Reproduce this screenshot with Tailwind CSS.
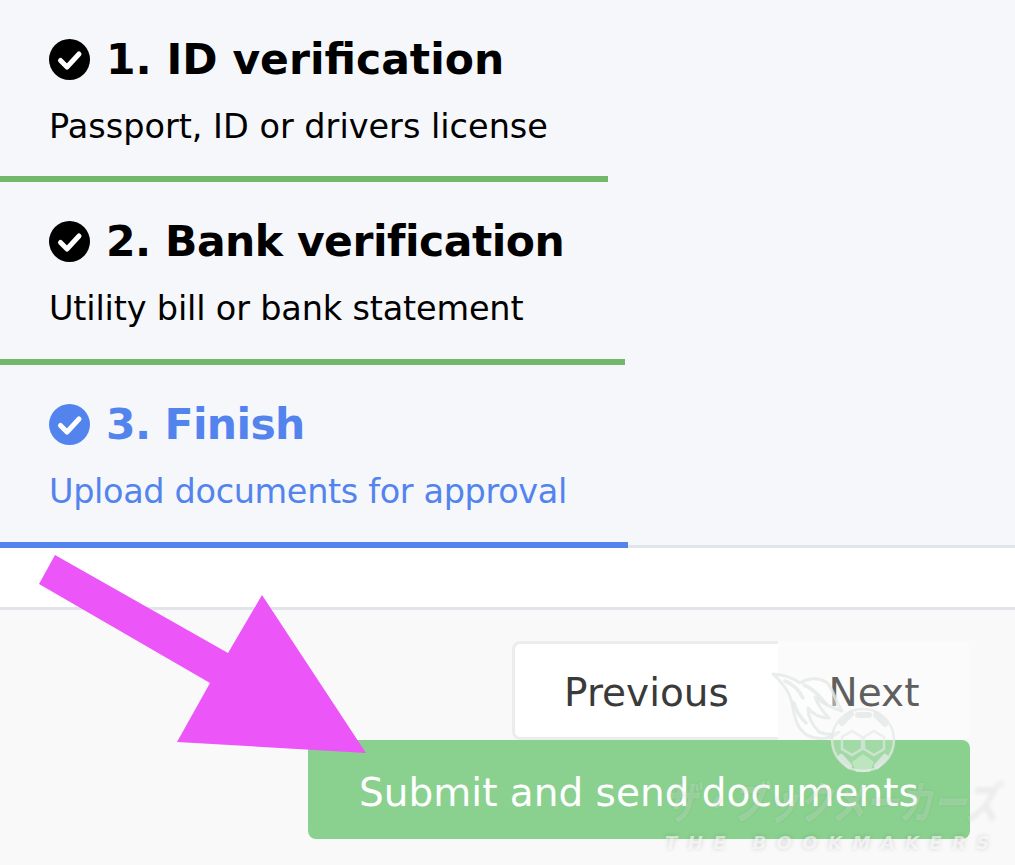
<!DOCTYPE html>
<html lang="en">

<head>
  <meta charset="UTF-8" />
  <title>Verification steps</title>
  <script src="https://cdn.jsdelivr.net/npm/@tailwindcss/browser@4"></script>
</head>

<body class="relative w-[1015px] h-[865px] overflow-hidden bg-[#f9f9f9] font-['DejaVu_Sans',sans-serif]">

  <!-- Steps -->
  <div class="bg-[#f6f7fb] h-[548px] border-b-[3px] border-[#e1e5ea]">
    <div class="h-[182px] w-[608px] border-b-[6px] border-[#72b76a] pl-[49px] pt-[36px]">
      <div class="flex items-center gap-[16px] h-[48px]">
        <svg class="w-[41px] h-[41px] shrink-0 -mt-[2px]" viewBox="0 0 41 41">
          <circle cx="20.5" cy="20.5" r="20.5" fill="#000" />
          <path d="M11.5 21.5l6.5 6.5 12-13" fill="none" stroke="#fff" stroke-width="5" stroke-linecap="round" stroke-linejoin="round" />
        </svg>
        <h2 class="text-[42.5px] leading-[48px] font-bold text-black">1. ID verification</h2>
      </div>
      <p class="mt-[19px] text-[33.5px] leading-[48px] text-black">Passport, ID or drivers license</p>
    </div>

    <div class="h-[183px] w-[625px] border-b-[6px] border-[#72b76a] pl-[49px] pt-[36px]">
      <div class="flex items-center gap-[16px] h-[48px]">
        <svg class="w-[41px] h-[41px] shrink-0 -mt-[2px]" viewBox="0 0 41 41">
          <circle cx="20.5" cy="20.5" r="20.5" fill="#000" />
          <path d="M11.5 21.5l6.5 6.5 12-13" fill="none" stroke="#fff" stroke-width="5" stroke-linecap="round" stroke-linejoin="round" />
        </svg>
        <h2 class="text-[42.5px] leading-[48px] font-bold tracking-[-0.5px] text-black">2. Bank verification</h2>
      </div>
      <p class="mt-[19px] text-[33.5px] leading-[48px] tracking-[-0.17px] text-black">Utility bill or bank statement</p>
    </div>

    <div class="h-[183px] w-[628px] border-b-[6px] border-[#5384ee] pl-[49px] pt-[36px]">
      <div class="flex items-center gap-[16px] h-[48px]">
        <svg class="w-[41px] h-[41px] shrink-0 -mt-[2px]" viewBox="0 0 41 41">
          <circle cx="20.5" cy="20.5" r="20.5" fill="#5384ee" />
          <path d="M11.5 21.5l6.5 6.5 12-13" fill="none" stroke="#fff" stroke-width="5" stroke-linecap="round" stroke-linejoin="round" />
        </svg>
        <h2 class="text-[42.5px] leading-[48px] font-bold tracking-[-0.65px] text-[#5384ee]">3. Finish</h2>
      </div>
      <p class="mt-[19px] text-[33.5px] leading-[48px] tracking-[-0.35px] text-[#5384ee]">Upload documents for approval</p>
    </div>
  </div>

  <div class="h-[62px] bg-white border-b-[3px] border-[#e1e5ea]"></div>

  <!-- Footer buttons -->
  <div class="flex flex-col items-end pt-[31px] pr-[45px]">
    <div class="flex h-[99px]">
      <button class="w-[266px] pt-[6px] bg-white border-[3px] border-r-0 border-[#ececec] rounded-l-[8px] text-[39px] text-[#3a3a3a]">Previous</button>
      <button class="w-[192px] pt-[6px] bg-[#fbfbfb] rounded-r-[8px] text-[39px] text-[#5f5f5f]">Next</button>
    </div>
    <button class="w-[662px] h-[99px] pt-[7px] bg-[#8ad18f] rounded-[8px] text-[39px] text-white">Submit and send documents</button>
  </div>

  <!-- Watermark -->
  <div class="absolute left-[660px] top-[665px] w-[355px] h-[200px] pointer-events-none">
    <svg class="absolute left-[110px] top-[0px] w-[130px] h-[115px]" viewBox="0 0 130 115">
      <!-- flame -->
      <path d="M3 9c12 1 20 4 27 9 8-5 18-6 26-1 7 5 9 19 16 29-10-3-19-8-27-14 3 9 8 15 14 21-9 0-16-4-21-10 0 9 4 17 11 24 7 3 14 3 20 0-8 7-21 9-32 3-11-7-13-20-15-32-2-11-9-20-19-29z" fill="#ffffff" fill-opacity="0.45" stroke="#e4e8e6" stroke-opacity="0.8" stroke-width="3" stroke-linejoin="round" />
      <path d="M15 16c8 3 14 9 18 17M34 20c8 3 15 10 22 19M24 38c2 8 6 14 12 20" fill="none" stroke="#e4e8e6" stroke-opacity="0.8" stroke-width="3.5" stroke-linecap="round" />
      <!-- ball -->
      <circle cx="93" cy="75" r="31" fill="#ffffff" fill-opacity="0.2" stroke="#e4e8e6" stroke-opacity="0.75" stroke-width="2.5" />
      <path d="M82 66l10 6v12l-10 6-10-6V72zM104 66l10 6v12l-10 6-10-6V72z" fill="none" stroke="#e4e8e6" stroke-opacity="0.65" stroke-width="2.5" />
      <path d="M93 89l11 8-4 10H86l-4-10z" fill="#ffffff" fill-opacity="0.3" />
      <path d="M72 58l9-9M88 50h11M106 50l9 9M71 92l8 9M115 92l-8 9" fill="none" stroke="#e4e8e6" stroke-opacity="0.8" stroke-width="6" stroke-linecap="round" />
    </svg>
    <div class="absolute left-[4px] top-[107px] origin-left scale-x-75 whitespace-nowrap italic font-bold text-[45px] leading-[56px] text-white/20 [text-shadow:0_0_4px_rgba(0,0,0,0.07)] font-['Noto_Sans_CJK_JP',sans-serif]">ザ・ブックメーカーズ</div>
    <div class="absolute left-[5px] top-[166px] whitespace-nowrap italic font-bold text-[18px] leading-[24px] tracking-[10.4px] text-white/60 [text-shadow:0_0_5px_rgba(0,0,0,0.16)]">THE BOOKMAKERS</div>
  </div>

  <!-- Arrow annotation -->
  <svg class="absolute left-0 top-0 w-[1015px] h-[865px] pointer-events-none" viewBox="0 0 1015 865">
    <polygon points="55,555 228,653 262,595 366,753 177,742 210,683 39,584" fill="#ec55f8" />
  </svg>
</body>

</html>
